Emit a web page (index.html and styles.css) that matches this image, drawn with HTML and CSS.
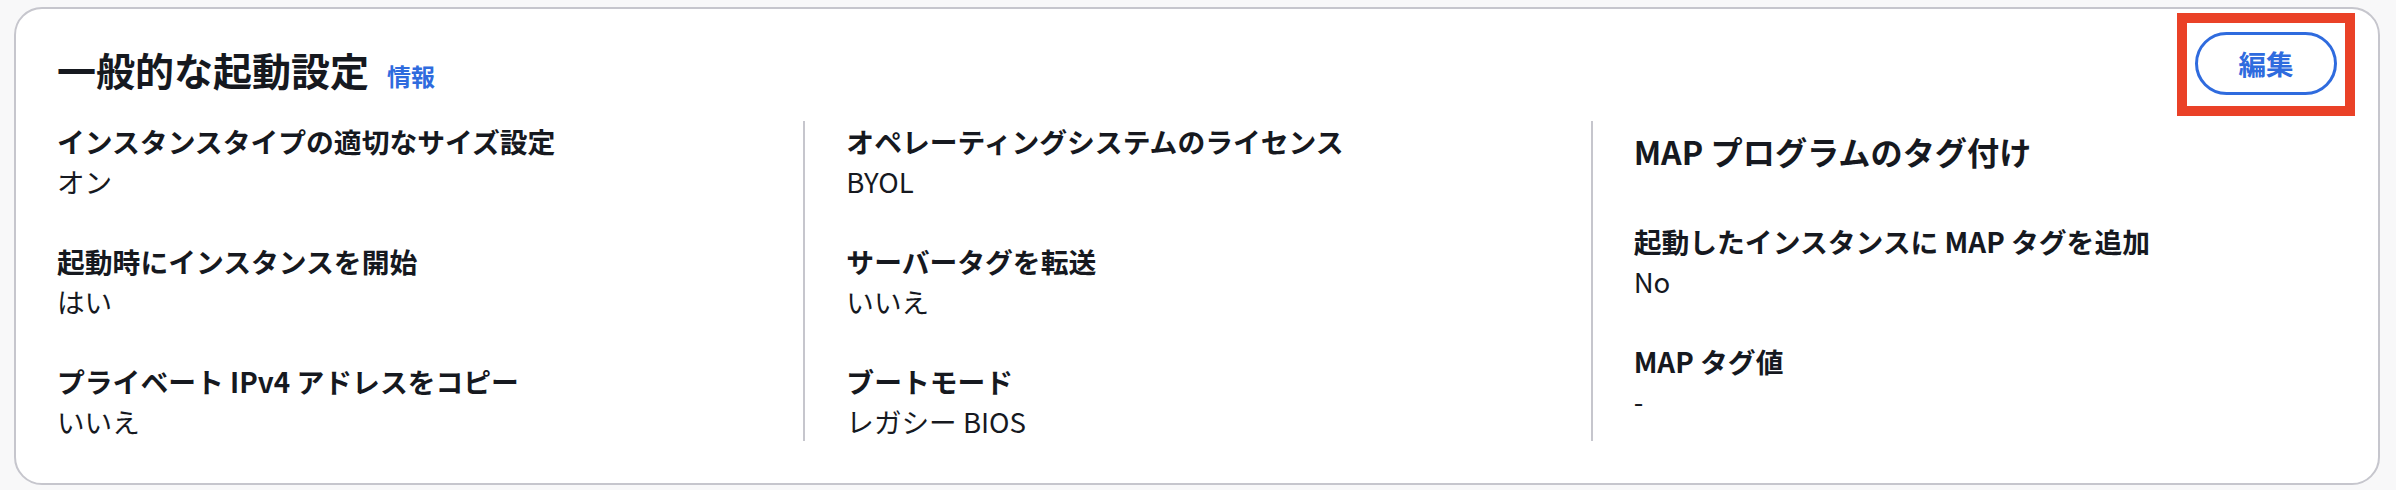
FILE: index.html
```html
<!DOCTYPE html>
<html lang="ja">
<head>
<meta charset="utf-8">
<title>一般的な起動設定</title>
<link rel="stylesheet" href="styles.css">
</head>
<body>
<section class="card">
  <header class="card-header">
    <h2 class="title">一般的な起動設定<a class="info" href="#">情報</a></h2>
    <div class="actions">
      <button class="btn" type="button">編集</button>
      <span class="highlight"></span>
    </div>
  </header>
  <div class="columns">
    <div class="col">
      <div class="item"><div class="label">インスタンスタイプの適切なサイズ設定</div><div class="value">オン</div></div>
      <div class="item"><div class="label">起動時にインスタンスを開始</div><div class="value">はい</div></div>
      <div class="item"><div class="label">プライベート IPv4 アドレスをコピー</div><div class="value">いいえ</div></div>
    </div>
    <div class="col col-divided">
      <div class="item"><div class="label">オペレーティングシステムのライセンス</div><div class="value">BYOL</div></div>
      <div class="item"><div class="label">サーバータグを転送</div><div class="value">いいえ</div></div>
      <div class="item"><div class="label">ブートモード</div><div class="value">レガシー BIOS</div></div>
    </div>
    <div class="col col-divided">
      <h3 class="subtitle">MAP プログラムのタグ付け</h3>
      <div class="item"><div class="label">起動したインスタンスに MAP タグを追加</div><div class="value">No</div></div>
      <div class="item"><div class="label">MAP タグ値</div><div class="value">-</div></div>
    </div>
  </div>
</section>
</body>
</html>
```
FILE: styles.css
```css
* { box-sizing: border-box; }

html, body {
  margin: 0;
  padding: 0;
  background: #f8f8f9;
}

body {
  font-family: "Noto Sans CJK JP", "Noto Sans", sans-serif;
  color: #16191f;
  padding-top: 7px;
}

.card {
  margin: 0 16px 0 14px;
  background: #ffffff;
  border: 2px solid #c6c6cd;
  border-radius: 28px;
  padding: 0 41px 42px 41px;
}

.card-header {
  display: flex;
  justify-content: space-between;
  align-items: flex-start;
  padding-top: 23px;
}

.title {
  margin: 13px 0 0 0;
  font-size: 39px;
  line-height: 48px;
  font-weight: 700;
  color: #16191f;
  display: flex;
  align-items: baseline;
}

.info {
  margin-left: 18px;
  font-size: 24px;
  font-weight: 700;
  color: #2f6bde;
  text-decoration: none;
}

.actions {
  position: relative;
}

.btn {
  display: block;
  width: 142px;
  height: 63px;
  border: 3px solid #2f6bde;
  border-radius: 32px;
  background: #ffffff;
  color: #2f6bde;
  font-family: "Noto Sans CJK JP", sans-serif;
  font-size: 27.5px;
  font-weight: 700;
  line-height: 1;
  padding: 0;
}

.highlight {
  position: absolute;
  top: -19px;
  left: -18px;
  right: -18px;
  bottom: -21px;
  border: 10px solid #ea4127;
  pointer-events: none;
}

.columns {
  display: grid;
  grid-template-columns: 1fr 1fr 1fr;
  margin: 21px -41px 0 -41px;
}

.col {
  display: flex;
  flex-direction: column;
  gap: 40px;
  padding-left: 41px;
  padding-right: 20px;
}

.col-divided {
  border-left: 2px solid #c6c6cd;
}

.subtitle {
  margin: 0;
  font-size: 32.2px;
  line-height: 60px;
  font-weight: 700;
}

.label {
  font-size: 27.8px;
  line-height: 40px;
  font-weight: 700;
  white-space: nowrap;
}

.value {
  font-size: 27.6px;
  line-height: 40px;
  font-weight: 400;
  white-space: nowrap;
}
```
